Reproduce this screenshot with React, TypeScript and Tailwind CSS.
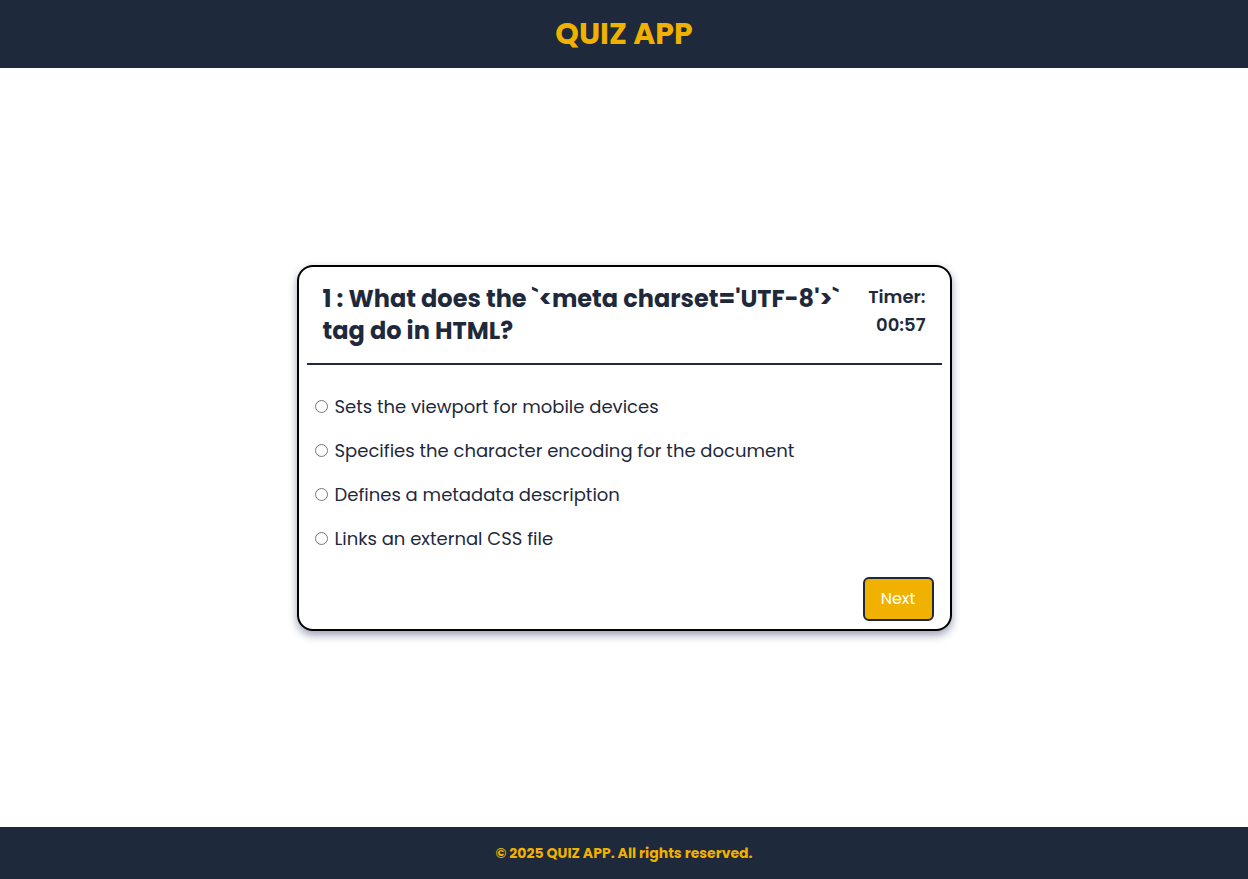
import React from "react";

const options = [
  "Sets the viewport for mobile devices",
  "Specifies the character encoding for the document",
  "Defines a metadata description",
  "Links an external CSS file",
];

export default function App() {
  return (
    <div
      className="min-h-screen flex flex-col bg-white"
      style={{ fontFamily: "Poppins, 'Open Sans', 'Noto Sans', sans-serif" }}
    >
      <header className="bg-[#1e293b] py-4 text-center">
        <h1 className="text-3xl font-bold text-[#f0b100]">QUIZ APP</h1>
      </header>
      <main className="flex-1 flex items-center justify-center">
        <div className="w-[655px] border-2 border-black rounded-2xl p-2 bg-white shadow-[0_4px_8px_rgba(30,41,90,0.45)]">
          <div className="flex justify-between items-start px-4 pt-2 pb-4 border-b-2 border-[#1e293b]">
            <h2 className="text-2xl font-bold text-[#1e293b] w-[530px]">
              1 : What does the `&lt;meta charset='UTF-8'&gt;` tag do in HTML?
            </h2>
            <div className="text-lg leading-[28px] font-semibold text-[#1e293b] text-right">
              <div>Timer:</div>
              <div>00:57</div>
            </div>
          </div>
          <div className="flex flex-col gap-4 pt-7 pl-2 pr-2">
            {options.map((o) => (
              <label key={o} className="flex items-center gap-[7px] text-lg text-[#1e293b]">
                <input type="radio" name="opt" className="w-[13px] h-[13px] m-0" />
                <span>{o}</span>
              </label>
            ))}
          </div>
          <div className="flex justify-end pt-6 pr-2">
            <button className="bg-[#f0b100] text-white border-2 border-[#1e293b] rounded-md w-[71px] h-[44px] text-base">
              Next
            </button>
          </div>
        </div>
      </main>
      <footer className="bg-[#1e293b] py-4 text-center">
        <p className="text-sm font-bold text-[#f0b100]">© 2025 QUIZ APP. All rights reserved.</p>
      </footer>
    </div>
  );
}
